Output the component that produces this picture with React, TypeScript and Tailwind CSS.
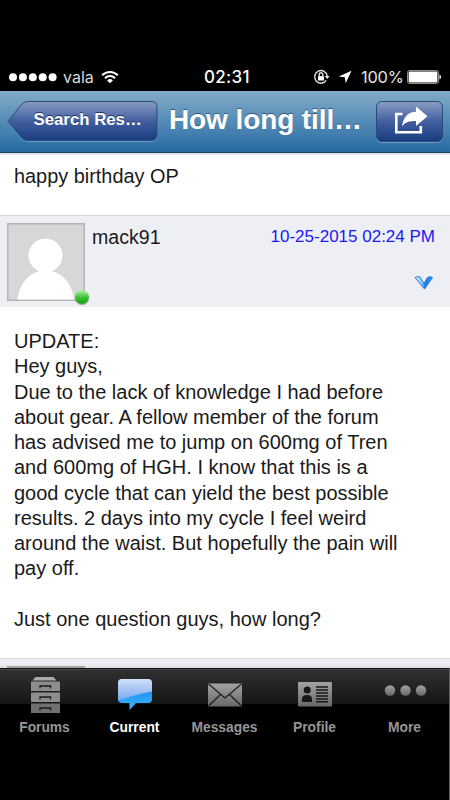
import type { ReactNode } from "react";

const lines = [
  "UPDATE:",
  "Hey guys,",
  "Due to the lack of knowledge I had before",
  "about gear. A fellow member of the forum",
  "has advised me to jump on 600mg of Tren",
  "and 600mg of HGH. I know that this is a",
  "good cycle that can yield the best possible",
  "results. 2 days into my cycle I feel weird",
  "around the waist. But hopefully the pain will",
  "pay off.",
  "",
  "Just one question guys, how long?",
];

const StatusBar = () => (
  <div className="h-[91px] pt-[66px] bg-black text-white">
    <div className="relative flex h-[22px] items-center">
      <svg className="ml-[8px] shrink-0" width="50" height="10" fill="#fff">
        <circle cx="5" cy="5.2" r="4" />
        <circle cx="14.9" cy="5.2" r="4" />
        <circle cx="24.8" cy="5.2" r="4" />
        <circle cx="34.7" cy="5.2" r="4" />
        <circle cx="44.6" cy="5.2" r="4" />
      </svg>
      <span className="ml-[5px] w-[30px] font-['Inter'] text-[16px] leading-[22px] text-[#d8d8d8]">vala</span>
      <svg className="ml-[8px]" width="18" height="14" viewBox="0 0 18 14" fill="none" stroke="#fff" strokeWidth="2">
        <path d="M1.2 5.2a11 11 0 0 1 15.6 0" />
        <path d="M4 8.2a7 7 0 0 1 10 0" />
        <path d="M9 13.3L6.1 10.4a4.1 4.1 0 0 1 5.8 0z" fill="#fff" stroke="none" />
      </svg>
      <span className="absolute left-[204px] top-0 font-['Inter'] text-[17px] font-medium leading-[22px] tracking-[0.3px]">02:31</span>
      <div className="ml-auto mr-[8px] flex items-center">
        <svg width="18" height="16" viewBox="0 0 18 16" fill="none" stroke="#e4e4e4" strokeWidth="1.4">
          <path d="M13.2 11.4A6.3 6.3 0 1 1 14.2 7" />
          <path d="M11.8 7h4.8l-2.4 3z" fill="#e4e4e4" stroke="none" />
          <path d="M5 7.2h6v4.3H5z" fill="#fff" stroke="none" />
          <path d="M6.2 7.4V5.6a1.8 1.8 0 0 1 3.6 0v1.8" />
        </svg>
        <svg className="ml-[7px]" width="14" height="14" viewBox="0 0 14 14" fill="#fff">
          <path d="M13.5 .7L7.7 13.2L6.8 7.2L.7 6.4z" />
        </svg>
        <span className="ml-[9px] w-[42px] whitespace-nowrap font-['Inter'] text-[16.4px] leading-[22px] tracking-[-0.2px] text-[#e6e6e6]">100%</span>
        <svg className="ml-[4px]" width="35" height="14" viewBox="0 0 35 14">
          <rect x=".5" y=".5" width="31" height="13" rx="2" fill="none" stroke="#8d8d8d" />
          <rect x="1.6" y="1.6" width="28.8" height="10.8" rx="1" fill="#fff" />
          <path d="M32.5 4.5v5a2.8 2.8 0 0 0 0-5z" fill="#fff" />
        </svg>
      </div>
    </div>
  </div>
);

const NavBar = () => (
  <div className="flex h-[62px] items-start border-b border-b-[#173f5e] bg-gradient-to-b from-[#82abc8] to-[#236ba3] pt-[10px]">
    <div className="relative ml-[7px] h-[41px] w-[151px] shrink-0">
      <svg className="absolute inset-0" width="151" height="41" viewBox="0 0 151 41">
        <defs>
          <linearGradient id="navButton" x1="0" y1="0" x2="0" y2="1">
            <stop offset="0" stopColor="#899cc2" />
            <stop offset=".5" stopColor="#425f9f" />
            <stop offset="1" stopColor="#183d80" />
          </linearGradient>
        </defs>
        <path d="M1 21.5L14 5q3-3.5 7-3.5h123q6 0 6 6v27q0 6-6 6H21q-4 0-7-3.5z" fill="none" stroke="#7ba6ca" strokeOpacity=".7" />
        <path d="M1 20.5L14 4q3-3.5 7-3.5h123q6 0 6 6v27q0 6-6 6H21q-4 0-7-3.5z" fill="url(#navButton)" stroke="#2b4a77" />
      </svg>
      <span className="relative ml-[26.5px] block whitespace-nowrap pt-[8px] font-['Liberation_Sans'] text-[16.8px] font-bold leading-[22px] text-white [text-shadow:0_-1px_0_#20365f]">
        Search Res…
      </span>
    </div>
    <h1 className="ml-[11px] w-[197px] whitespace-nowrap pt-[2px] font-['Liberation_Sans'] text-[28px] font-bold leading-[34px] tracking-[-0.1px] text-white [text-shadow:0_-1px_0_#2e5876]">
      How long till…
    </h1>
    <div className="ml-[10px] flex h-[41px] w-[67px] shrink-0 items-center justify-center rounded-[6px] border border-[#2b4a77] bg-gradient-to-b from-[#899cc2] via-[#425f9f] to-[#183d80] pb-[2px] pl-[5px] shadow-[0_1px_0_#6fa0c4]">
      <svg className="shrink-0" width="36" height="29" viewBox="0 0 36 29">
        <path d="M8.500 8H2.300v18.200h24.500V20" fill="none" stroke="#fff" strokeWidth="2.6" />
        <path d="M22 .5L33.500 10.200L22 20v-5c-6.500 0-11 1-14 5.500C9 11.500 14 6 22 5.800z" fill="#fff" />
      </svg>
    </div>
  </div>
);

const PostHeader = () => (
  <div className="flex h-[92px] border-t border-t-[#d5d5d8] bg-[#eeeff5] pl-[7px] pt-[7px] font-['Liberation_Sans']">
    <div className="relative h-[78px] w-[78px] shrink-0">
      <svg width="78" height="78" viewBox="0 0 78 78">
        <rect x=".75" y=".75" width="76.5" height="76.5" fill="#d7d7d7" stroke="#b4b4b4" strokeWidth="1.5" />
        <path d="M10.5 76.5C12 62 22 50 32.5 48.3a17 17 0 1 1 12 0C56 50 65.5 62 67 76.5z" fill="#fff" />
      </svg>
      <span className="absolute left-[68px] top-[67px] size-[14px] rounded-full bg-gradient-to-b from-[#b3edab] via-[#3cc634] to-[#109d16] shadow-[0_1px_1px_#8b988b]" />
    </div>
    <span className="ml-[7px] pt-[1px] text-[19.6px] leading-[26px] text-[#1a1a1a]">mack91</span>
    <div className="ml-auto mr-[15px] flex flex-col items-end">
      <span className="mt-[4px] whitespace-nowrap text-[17px] leading-[20px] text-[#1a18f4]">10-25-2015 02:24 PM</span>
      <svg className="mr-[1px] mt-[28px]" width="20" height="16" viewBox="0 0 20 16">
        <defs>
          <linearGradient id="check">
            <stop offset="0" stopColor="#d8f2ff" />
            <stop offset=".42" stopColor="#7cc8fa" />
            <stop offset=".55" stopColor="#1e7cf0" />
            <stop offset="1" stopColor="#2b94f7" />
          </linearGradient>
        </defs>
        <path d="M1 2.500Q3.500 .800 6 2L10 8.500L13.500 2.500Q16 .800 18.500 2.500L10.500 14z" fill="url(#check)" stroke="#2469cb" strokeWidth=".9" strokeLinejoin="round" />
      </svg>
    </div>
  </div>
);

const Tab = ({ label, active, children }: { label: string; active?: boolean; children: ReactNode }) => (
  <div className="flex h-[70px] w-[90px] shrink-0 flex-col items-center">
    <svg className="shrink-0" width="48" height="44" viewBox="0 0 48 44">{children}</svg>
    <span className={`mr-[1px] mt-[6px] font-['Liberation_Sans'] text-[13.8px] font-bold leading-[16px] ${active ? "text-white" : "text-[#969696]"}`}>
      {label}
    </span>
  </div>
);

const TabBar = () => (
  <div className="h-[132px] border-r border-t border-r-[#606060] border-t-[#161616] bg-black">
    <svg className="absolute" width="0" height="0">
      <defs>
        <linearGradient id="grey" x1="0" y1="0" x2="0" y2="1">
          <stop offset="0" stopColor="#a2a2a2" />
          <stop offset="1" stopColor="#686868" />
        </linearGradient>
        <linearGradient id="bubble" x1="0" y1="0" x2="0" y2="1">
          <stop offset="0" stopColor="#d3e0f9" />
          <stop offset="1" stopColor="#77a9ee" />
        </linearGradient>
        <linearGradient id="bubbleLow" x1="0" y1="0" x2="0" y2="1">
          <stop offset="0" stopColor="#1674ed" />
          <stop offset="1" stopColor="#38bcff" />
        </linearGradient>
      </defs>
    </svg>
    <div className="flex h-[35px] border-t border-t-[#474747] bg-gradient-to-b from-[#303030] to-[#151515]">
      <Tab label="Forums">
        <path d="M14.5 7h18l3 3.5h-24z" fill="#aaa" />
        <path d="M10 11.5h29V21H10zM10 22.5h29V32H10z" fill="#8d8d8d" />
        <path d="M10 33.5h29v9.5H10z" fill="#707070" />
        <path d="M19 18.5V16h10.5v2.500M19 29.5V27h10.500v2.500M19 40.500V38h10.500v2.500" fill="none" stroke="#181818" strokeWidth="1.3" />
      </Tab>
      <Tab label="Current" active>
        <path d="M11 9h26q4 0 4 4v16q0 4-4 4H25l-6.500 7v-7H11q-4 0-4-4V13q0-4 4-4z" fill="url(#bubbleLow)" />
        <path d="M11 9h26q4 0 4 4v8.500Q30 23 7 30.500V13q0-4 4-4z" fill="url(#bubble)" />
      </Tab>
      <Tab label="Messages">
        <path d="M7 13.5h34v23H7z" fill="url(#grey)" />
        <path d="M7.5 14L24 28l16.5-14M7.5 36l12-11.500M40.500 36l-12-11.500" fill="none" stroke="#1c1c1c" strokeWidth="1.2" />
      </Tab>
      <Tab label="Profile">
        <rect x="7" y="12" width="34" height="24.5" rx="1" fill="url(#grey)" />
        <circle cx="16.2" cy="20" r="3.5" fill="#171717" />
        <path d="M11 32v-3q0-4 5-4t5 4v3zM25 16.300h12v1.500H25zM25 19.300h12v1.500H25zM25 22.300h12v1.500H25zM25 25.300h12v1.500H25zM25 28.300h12v1.500H25zM25 31h12v1.500H25z" fill="#171717" />
      </Tab>
      <Tab label="More">
        <circle cx="9" cy="20.5" r="5.2" fill="url(#grey)" />
        <circle cx="24.5" cy="20.5" r="5.2" fill="url(#grey)" />
        <circle cx="40" cy="20.5" r="5.2" fill="url(#grey)" />
      </Tab>
    </div>
  </div>
);

const App = () => (
  <div className="h-[800px] w-[450px] overflow-hidden bg-white">
    <StatusBar />
    <NavBar />
    <div className="h-[62px] bg-gradient-to-b from-[#d8d8d8] to-white to-[3px] pl-[14px] pt-[10px] font-['Liberation_Sans'] text-[19.9px] leading-[26px] text-[#1a1a1a]">
      happy birthday OP
    </div>
    <PostHeader />
    <div className="h-[351px] pl-[14px] pt-[22px] font-['Liberation_Sans'] text-[20px] leading-[25.28px] text-[#1a1a1a]">
      {lines.map((line, index) => (
        <p className="h-[25.28px] whitespace-nowrap" key={index}>{line}</p>
      ))}
    </div>
    <div className="flex h-[10px] items-end border-t border-t-[#d9d9dc] bg-gradient-to-b from-[#eeeff5] from-60% to-[#dcdce2] pl-[7px]">
      <div className="h-[2px] w-[78px] bg-[#a4a4a4]" />
    </div>
    <TabBar />
  </div>
);

export default App;
